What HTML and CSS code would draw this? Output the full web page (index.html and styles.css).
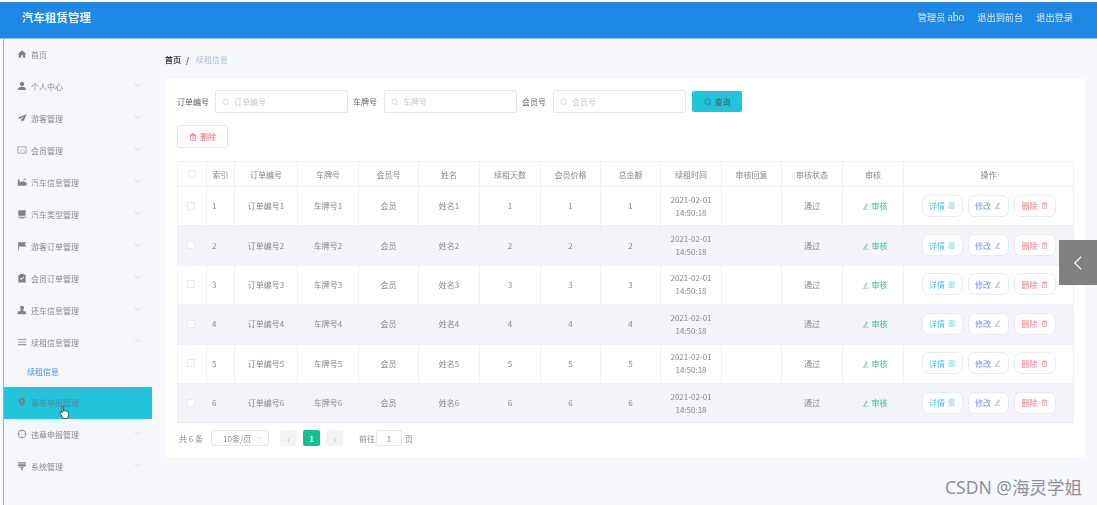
FILE: index.html
```html
<!DOCTYPE html>
<html lang="zh">
<head>
<meta charset="utf-8">
<title>汽车租赁管理</title>
<link rel="stylesheet" href="styles.css">
</head>
<body>
<svg class="defs" width="0" height="0" aria-hidden="true">
  <symbol id="i-search" viewBox="0 0 10 10"><circle cx="4.6" cy="4.6" r="3.4" fill="none" stroke="currentColor" stroke-width=".8"/><path d="M7 7l2 2" stroke="currentColor" stroke-width=".8"/></symbol>
  <symbol id="i-chev" viewBox="0 0 10 6"><path d="M1 1l4 4 4-4" fill="none" stroke="currentColor" stroke-width=".9"/></symbol>
  <symbol id="i-trash" viewBox="0 0 10 10"><path d="M2 2.6h6v6.6H2zM1 2.6h8M3.6 2.6V1h2.8v1.6M3.6 5h2.8M3.6 7h2.8" fill="none" stroke="currentColor" stroke-width=".8"/></symbol>
  <symbol id="i-edit" viewBox="0 0 10 10"><path d="M6.8 1L3.4 6.4l-.3 1.5 1.3-.7L7.8 1.8zM1 9h8" fill="none" stroke="currentColor" stroke-width=".8"/></symbol>
  <symbol id="i-doc" viewBox="0 0 10 10"><path d="M1.5 1h7v8h-7zM3.2 3.4h3.6M3.2 5.2h3.6M3.2 7h3.6" fill="none" stroke="currentColor" stroke-width=".8"/></symbol>
</svg>
<div class="page">
  <header class="topbar">
    <div class="logo">汽车租赁管理</div>
    <nav class="top-links"><span>管理员 <span class="top-name">abo</span></span><span>退出到前台</span><span>退出登录</span></nav>
  </header>
  <div class="body-wrap">
    <aside class="sidebar">
      <div class="menu-item">
        <svg class="m-icon" viewBox="0 0 12 12"><path d="M6 1.4L.6 6.4h1.7v4.2h2.6V7.6h2.2v3h2.6V6.4h1.7z"/></svg>
        <span class="m-text">首页</span>
      </div>
      <div class="menu-item">
        <svg class="m-icon" viewBox="0 0 12 12"><circle cx="6" cy="3.6" r="2.6"/><path d="M1.2 10.8c0-3 1.8-3.9 4.8-3.9s4.8.9 4.8 3.9z"/></svg>
        <span class="m-text">个人中心</span><svg class="m-chev"><use href="#i-chev"/></svg>
      </div>
      <div class="menu-item">
        <svg class="m-icon" viewBox="0 0 12 12"><path d="M11.2 1.6L1 5.6l2.6 1.2 5.6-3.6-4.2 4.4v2.8l1.6-1.8 1.6.9z"/></svg>
        <span class="m-text">游客管理</span><svg class="m-chev"><use href="#i-chev"/></svg>
      </div>
      <div class="menu-item">
        <svg class="m-icon" viewBox="0 0 12 12"><path d="M1 2.2h10v7.6H1z" fill="none" stroke="currentColor" stroke-width=".8"/><path d="M3 6l1.4 1.4L7 4.8M8 7h1.6" fill="none" stroke="currentColor" stroke-width=".7"/></svg>
        <span class="m-text">会员管理</span><svg class="m-chev"><use href="#i-chev"/></svg>
      </div>
      <div class="menu-item">
        <svg class="m-icon" viewBox="0 0 12 12"><path d="M1 10.4h10.4V6.2H8.8V4.4L6.4 6.2V4.4L4 6.2H3V3H1z"/><path d="M7.6 3.4L10 1.6l.6 2z"/></svg>
        <span class="m-text">汽车信息管理</span><svg class="m-chev"><use href="#i-chev"/></svg>
      </div>
      <div class="menu-item">
        <svg class="m-icon" viewBox="0 0 12 12"><path d="M1.6 1.4h8.8v6.8H1.6zM.8 9.2h10.4v.9H.8zM3.4 10.6h5.2v.8H3.4z"/></svg>
        <span class="m-text">汽车类型管理</span><svg class="m-chev"><use href="#i-chev"/></svg>
      </div>
      <div class="menu-item">
        <svg class="m-icon" viewBox="0 0 12 12"><path d="M1.4 1.2h1v10h-1zM2.4 1.6h8.8L9.2 4l2 2.6H2.4z"/></svg>
        <span class="m-text">游客订单管理</span><svg class="m-chev"><use href="#i-chev"/></svg>
      </div>
      <div class="menu-item">
        <svg class="m-icon" viewBox="0 0 12 12"><path fill-rule="evenodd" d="M4 .8h4v1.2h2.4v9.4H1.6V2H4zM3.4 6.4l2 2 3.2-3.4-.8-.7-2.4 2.6-1.2-1.2z"/></svg>
        <span class="m-text">会员订单管理</span><svg class="m-chev"><use href="#i-chev"/></svg>
      </div>
      <div class="menu-item">
        <svg class="m-icon" viewBox="0 0 12 12"><circle cx="6" cy="3.2" r="2.4"/><path d="M4.6 5.2h2.8l.4 2.4h2.6l.4 3.4H.8l.4-3.4h2.6z"/></svg>
        <span class="m-text">还车信息管理</span><svg class="m-chev"><use href="#i-chev"/></svg>
      </div>
      <div class="menu-item">
        <svg class="m-icon" viewBox="0 0 12 12"><path d="M1 2.4h10v1H1zM1 5.6h10v1H1zM1 8.8h10v1H1z"/></svg>
        <span class="m-text">续租信息管理</span><svg class="m-chev m-chev-up"><use href="#i-chev"/></svg>
      </div>
      <div class="menu-sub">续租信息</div>
      <div class="menu-item menu-active">
        <svg class="m-icon" viewBox="0 0 12 12"><path fill-rule="evenodd" d="M6 .8a4 4 0 0 1 4 4c0 2.6-2.6 4.8-4 6.4-1.4-1.6-4-3.8-4-6.4a4 4 0 0 1 4-4zM6 3.4a1.4 1.4 0 1 0 0 2.8 1.4 1.4 0 0 0 0-2.800z"/></svg>
        <span class="m-text">事故申报管理</span><svg class="m-chev"><use href="#i-chev"/></svg>
        <svg class="hand" viewBox="0 0 12 16"><path d="M3.4 1.6c0-1 1.6-1 1.6 0v5l.6-.2c.2-.8 1.500-.7 1.600.2.300-.7 1.500-.5 1.500.4.400-.5 1.500-.3 1.500.7v3.300c0 1.600-.8 3-1.500 3.600H4.600L1.400 9c-.7-1 .5-2 1.300-1.200l.7.8z" fill="#fff" stroke="#222" stroke-width=".8"/></svg>
      </div>
      <div class="menu-item">
        <svg class="m-icon" viewBox="0 0 12 12"><circle cx="6" cy="6" r="4.8" fill="none" stroke="currentColor" stroke-width=".9"/><path d="M6 1.2v2.4M6 8.4v2.4M1.2 6h2.4M8.4 6h2.4" stroke="currentColor" stroke-width=".9"/></svg>
        <span class="m-text">违章申报管理</span><svg class="m-chev"><use href="#i-chev"/></svg>
      </div>
      <div class="menu-item">
        <svg class="m-icon" viewBox="0 0 12 12"><path d="M1.4 1.4h9.2V3H1.4zM1.4 3.8h9.200v2.800H1.400zM3.600 7.400h4.800v.9H3.600zM5.200 8.300h1.600v3H5.200z"/></svg>
        <span class="m-text">系统管理</span><svg class="m-chev"><use href="#i-chev"/></svg>
      </div>
    </aside>
    <main class="main">
      <div class="crumb"><b>首页</b><i>/</i><span>续租信息</span></div>
      <section class="card">
        <div class="filters">
          <label class="f-label">订单编号</label>
          <div class="f-input"><svg class="s-icon"><use href="#i-search"/></svg><span>订单编号</span></div>
          <label class="f-label">车牌号</label>
          <div class="f-input"><svg class="s-icon"><use href="#i-search"/></svg><span>车牌号</span></div>
          <label class="f-label">会员号</label>
          <div class="f-input"><svg class="s-icon"><use href="#i-search"/></svg><span>会员号</span></div>
          <div class="btn-search"><svg class="s-icon"><use href="#i-search"/></svg>查询</div>
        </div>
        <div class="btn-del"><svg class="s-icon"><use href="#i-trash"/></svg>删除</div>
        <table class="grid">
          <colgroup><col class="c29"><col class="c28"><col class="c63"><col class="c61"><col class="c60"><col class="c61"><col class="c61"><col class="c60"><col class="c60"><col class="c61"><col class="c60"><col class="c61"><col class="c61"><col class="c170"></colgroup>
          <thead><tr><th><i class="chk chk-head"></i></th><th>索引</th><th>订单编号</th><th>车牌号</th><th>会员号</th><th>姓名</th><th>续租天数</th><th>会员价格</th><th>总金额</th><th>续租时间</th><th>审核回复</th><th>审核状态</th><th>审核</th><th>操作</th></tr></thead>
          <tbody>
            <tr><td><i class="chk"></i></td><td class="idx">1</td><td>订单编号1</td><td>车牌号1</td><td>会员</td><td>姓名1</td><td>1</td><td>1</td><td>1</td><td>2021-02-01<br>14:50:18</td><td></td><td>通过</td><td class="audit"><svg class="o-icon"><use href="#i-edit"/></svg>审核</td><td><div class="ops"><span class="op op-info">详情<svg class="o-icon"><use href="#i-doc"/></svg></span><span class="op op-edit">修改<svg class="o-icon"><use href="#i-edit"/></svg></span><span class="op op-del">删除<svg class="o-icon"><use href="#i-trash"/></svg></span></div></td></tr>
            <tr><td><i class="chk"></i></td><td class="idx">2</td><td>订单编号2</td><td>车牌号2</td><td>会员</td><td>姓名2</td><td>2</td><td>2</td><td>2</td><td>2021-02-01<br>14:50:18</td><td></td><td>通过</td><td class="audit"><svg class="o-icon"><use href="#i-edit"/></svg>审核</td><td><div class="ops"><span class="op op-info">详情<svg class="o-icon"><use href="#i-doc"/></svg></span><span class="op op-edit">修改<svg class="o-icon"><use href="#i-edit"/></svg></span><span class="op op-del">删除<svg class="o-icon"><use href="#i-trash"/></svg></span></div></td></tr>
            <tr><td><i class="chk"></i></td><td class="idx">3</td><td>订单编号3</td><td>车牌号3</td><td>会员</td><td>姓名3</td><td>3</td><td>3</td><td>3</td><td>2021-02-01<br>14:50:18</td><td></td><td>通过</td><td class="audit"><svg class="o-icon"><use href="#i-edit"/></svg>审核</td><td><div class="ops"><span class="op op-info">详情<svg class="o-icon"><use href="#i-doc"/></svg></span><span class="op op-edit">修改<svg class="o-icon"><use href="#i-edit"/></svg></span><span class="op op-del">删除<svg class="o-icon"><use href="#i-trash"/></svg></span></div></td></tr>
            <tr><td><i class="chk"></i></td><td class="idx">4</td><td>订单编号4</td><td>车牌号4</td><td>会员</td><td>姓名4</td><td>4</td><td>4</td><td>4</td><td>2021-02-01<br>14:50:18</td><td></td><td>通过</td><td class="audit"><svg class="o-icon"><use href="#i-edit"/></svg>审核</td><td><div class="ops"><span class="op op-info">详情<svg class="o-icon"><use href="#i-doc"/></svg></span><span class="op op-edit">修改<svg class="o-icon"><use href="#i-edit"/></svg></span><span class="op op-del">删除<svg class="o-icon"><use href="#i-trash"/></svg></span></div></td></tr>
            <tr><td><i class="chk"></i></td><td class="idx">5</td><td>订单编号5</td><td>车牌号5</td><td>会员</td><td>姓名5</td><td>5</td><td>5</td><td>5</td><td>2021-02-01<br>14:50:18</td><td></td><td>通过</td><td class="audit"><svg class="o-icon"><use href="#i-edit"/></svg>审核</td><td><div class="ops"><span class="op op-info">详情<svg class="o-icon"><use href="#i-doc"/></svg></span><span class="op op-edit">修改<svg class="o-icon"><use href="#i-edit"/></svg></span><span class="op op-del">删除<svg class="o-icon"><use href="#i-trash"/></svg></span></div></td></tr>
            <tr><td><i class="chk"></i></td><td class="idx">6</td><td>订单编号6</td><td>车牌号6</td><td>会员</td><td>姓名6</td><td>6</td><td>6</td><td>6</td><td>2021-02-01<br>14:50:18</td><td></td><td>通过</td><td class="audit"><svg class="o-icon"><use href="#i-edit"/></svg>审核</td><td><div class="ops"><span class="op op-info">详情<svg class="o-icon"><use href="#i-doc"/></svg></span><span class="op op-edit">修改<svg class="o-icon"><use href="#i-edit"/></svg></span><span class="op op-del">删除<svg class="o-icon"><use href="#i-trash"/></svg></span></div></td></tr>
          </tbody>
        </table>
        <div class="pager">
          <span class="p-total">共 6 条</span>
          <span class="p-size">10条/页<svg class="p-chev"><use href="#i-chev"/></svg></span>
          <span class="p-btn">&lsaquo;</span>
          <span class="p-num">1</span>
          <span class="p-btn">&rsaquo;</span>
          <span class="p-goto">前往</span>
          <span class="p-input">1</span>
          <span class="p-unit">页</span>
        </div>
      </section>
    </main>
  </div>
</div>
<div class="side-toggle"><svg viewBox="0 0 12 20"><path d="M10 2L2 10l8 8" fill="none" stroke="#fff" stroke-width="1.5"/></svg></div>
<div class="watermark">CSDN @海灵学姐</div>
</body>
</html>
```
FILE: styles.css
```css
* { box-sizing: border-box; }
html, body { margin: 0; height: 100%; background: #fff; overflow: hidden; }
body {
  position: relative;
  width: 1097px;
  height: 505px;
  font-family: "Noto Sans CJK SC", "Noto Sans", sans-serif;
  font-size: 8px;
  color: #77797f;
}
.defs { position: absolute; }
.page {
  height: 505px;
  padding: 2px 0 0 3px;
  filter: blur(.6px);
}
.topbar {
  height: 37px;
  margin-left: -3px;
  padding: 0 24px 0 22px;
  display: flex;
  align-items: center;
  justify-content: space-between;
  background: #1e88e5;
  border-bottom: 1px solid #8cc4f5;
  color: #fff;
}
.logo { font-size: 11.5px; font-weight: 700; margin-top: -6px; color: #eaf4fd; }
.top-links {
  display: flex;
  align-items: baseline;
  gap: 13px;
  font-family: "Liberation Serif", "Noto Sans CJK SC", serif;
  font-size: 9.2px;
  color: #dcecfb;
  margin-top: -6px;
}
.top-name { font-size: 11.5px; }
.body-wrap {
  display: flex;
  height: 466px;
  border-left: 1px solid #a9a9ad;
  background: #f7f8fd;
}
.sidebar { width: 148px; flex: none; background: #f6f7fc; }
.menu-item {
  position: relative;
  display: flex;
  align-items: center;
  height: 32px;
  padding: 0 12px 2px 13px;
  color: #85878d;
}
.m-icon { width: 10px; height: 10px; fill: currentColor; color: #7f8187; flex: none; margin-right: 4px; }
.m-text { flex: 1; }
.m-chev { width: 6px; height: 4px; color: #c2c4cb; margin-top: -3px; }
.m-chev-up { transform: rotate(180deg); }
.menu-sub { height: 28px; padding: 0 0 3px 23px; display: flex; align-items: center; color: #4c8fd6; }
.menu-active { background: #22c4d9; color: #4f8a9a; }
.menu-active .m-icon { color: #5c8c98; }
.menu-active .m-chev { color: #4fb6c5; }
.hand { position: absolute; left: 55px; top: 18px; width: 11px; height: 15px; }
.main { flex: 1; padding-right: 11px; }
.crumb { height: 40px; padding: 0 0 0 13px; display: flex; align-items: center; gap: 5px; color: #b4bac4; }
.crumb b { color: #3f4145; font-weight: 700; }
.crumb i { color: #3f4145; font-style: normal; font-weight: 700; margin-right: 2px; }
.card { margin-left: 13px; height: 378px; background: #fff; padding: 11px 12px; }
.filters { display: flex; align-items: center; height: 23px; }
.f-label { width: 38px; color: #5f6166; white-space: nowrap; }
.f-label + .f-input { margin-right: 5px; }
.f-label:nth-of-type(n+2) { width: 31px; }
.f-input {
  width: 133px;
  height: 23px;
  display: flex;
  align-items: center;
  gap: 4px;
  padding-left: 6px;
  border: 1px solid #e4e6ec;
  border-radius: 2px;
  color: #c6c8ce;
}
.s-icon { width: 8px; height: 8px; flex: none; }
.btn-search {
  width: 50px;
  height: 21px;
  margin-left: 1px;
  display: flex;
  align-items: center;
  justify-content: center;
  gap: 3px;
  background: #22c4d9;
  border-radius: 2px;
  color: #36616e;
}
.btn-del {
  width: 51px;
  height: 23px;
  margin-top: 12px;
  display: flex;
  align-items: center;
  justify-content: center;
  gap: 3px;
  border: 1px solid #e6e7ec;
  border-radius: 3px;
  color: #e8616f;
}
.grid {
  width: 896px;
  margin-top: 13px;
  table-layout: fixed;
  border-collapse: collapse;
  border: 1px solid #eff0f5;
  border-top-color: #f2f3f7;
}
.c29 { width: 29px; } .c28 { width: 28px; } .c63 { width: 63px; } .c61 { width: 61px; }
.c60 { width: 60px; } .c170 { width: 170px; }
.grid th, .grid td {
  padding: 0;
  border: 1px solid #f0f1f6;
  text-align: center;
  font-weight: 400;
  line-height: 13px;
}
.grid th { height: 25px; color: #85878d; }
.grid td { height: 39.4px; padding-bottom: 1px; color: #85878d; }
.grid td.idx { text-align: left; padding-left: 5px; }
.grid tbody tr:nth-child(even) { background: #f4f4f9; }
.grid tbody tr:nth-child(6) td { border-bottom-color: #e6e7ec; }
.chk { display: block; width: 8px; height: 8px; margin: 0 auto 0 8.5px; background: #fff; border: 1px solid #e8e8ee; border-radius: 1px; }
.chk-head { margin-left: 10px; }
.audit { color: #3dbb95 !important; }
.o-icon { width: 7px; height: 7px; margin: 0 3px; vertical-align: -1px; }
.ops { display: flex; justify-content: center; gap: 5px; }
.op {
  width: 41px;
  height: 22px;
  display: flex;
  align-items: center;
  justify-content: center;
  background: #fff;
  border: 1px solid #e9eaef;
  border-radius: 7px;
}
.op .o-icon { margin: 0 0 0 3px; }
.op-info { color: #4dc3d8; }
.op-edit { color: #7d95d9; }
.op-del { width: 42px; color: #ea7e8a; }
.pager { display: flex; align-items: center; height: 16px; margin-top: 7px; padding-left: 2px; color: #85878d; }
.p-total { width: 32px; }
.p-size {
  width: 58px;
  height: 16px;
  display: flex;
  align-items: center;
  justify-content: space-between;
  padding: 0 6px 0 11px;
  border: 1px solid #e6e7ec;
  border-radius: 2px;
}
.p-chev { width: 6px; height: 4px; color: #c2c4cb; }
.p-btn {
  width: 17px;
  height: 16px;
  display: flex;
  align-items: center;
  justify-content: center;
  margin-left: 6px;
  background: #f4f4f7;
  border-radius: 2px;
  color: #b8bac0;
  font-size: 10px;
}
.p-size + .p-btn { margin-left: 11px; }
.p-num {
  width: 17px;
  height: 16px;
  margin-left: 6px;
  display: flex;
  align-items: center;
  justify-content: center;
  background: #13c08f;
  border-radius: 2px;
  color: #fff;
  font-weight: 700;
}
.p-goto { margin-left: 16px; width: 17px; white-space: nowrap; }
.p-input {
  width: 26px;
  height: 16px;
  display: flex;
  align-items: center;
  justify-content: center;
  border: 1px solid #e6e7ec;
  border-radius: 2px;
}
.p-unit { margin-left: 3px; }
.side-toggle {
  position: absolute;
  left: 1059px;
  top: 240px;
  width: 38px;
  height: 45px;
  display: flex;
  align-items: center;
  justify-content: center;
  background: #808080;
}
.side-toggle svg { width: 10px; height: 16px; }
.watermark {
  position: absolute;
  left: 945px;
  top: 477px;
  font-family: "Noto Sans", "Noto Sans CJK SC", sans-serif;
  font-size: 17.5px;
  line-height: 20px;
  color: #909195;
  white-space: nowrap;
}
```
